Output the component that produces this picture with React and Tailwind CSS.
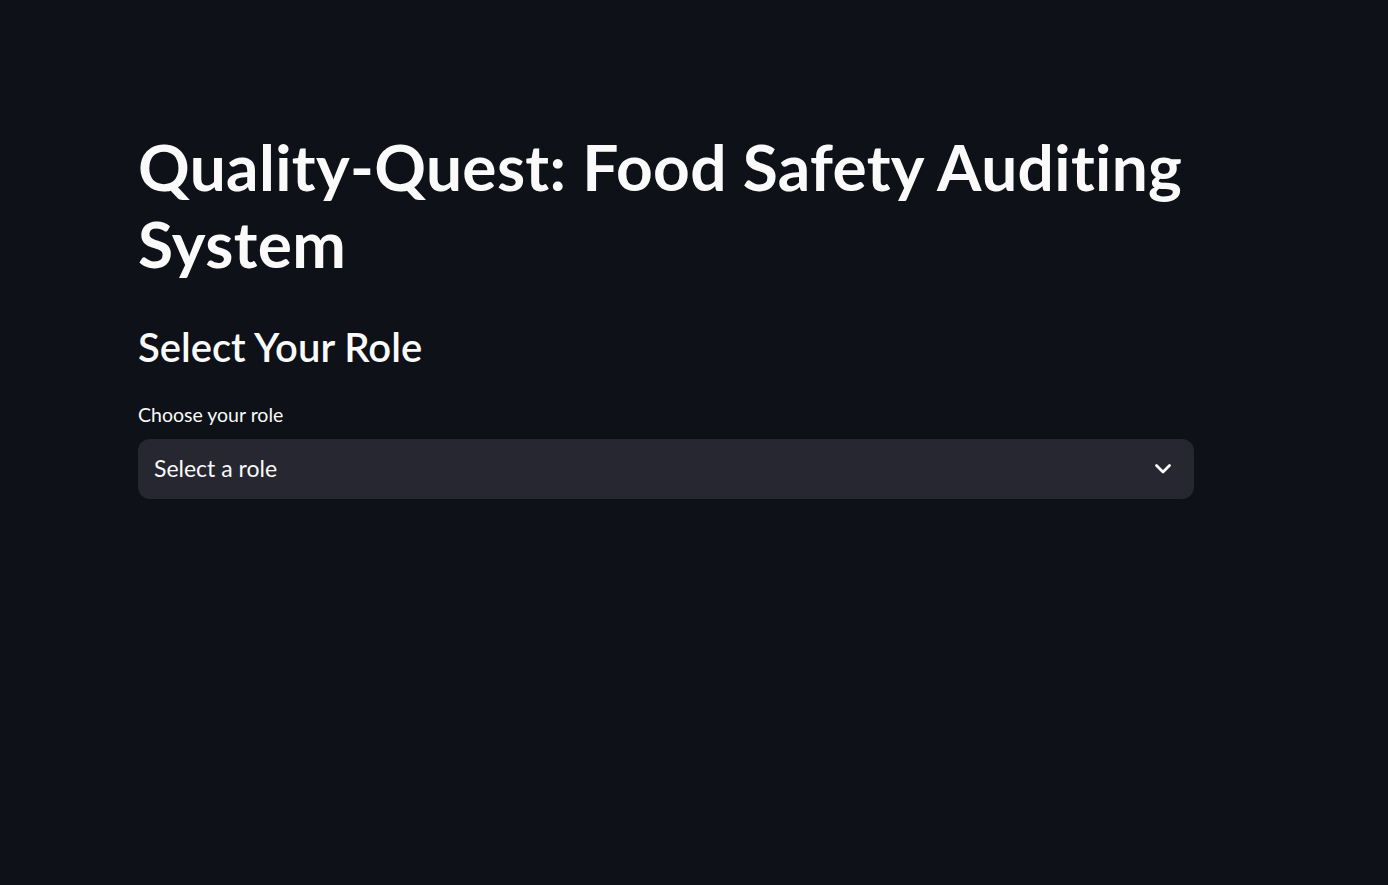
import { useState } from "react";

function Chevron() {
  return (
    <svg width="18" height="12" viewBox="0 0 18 12" fill="none" className="text-[#fafafa]">
      <path d="M2.5 2.5 L9 9 L15.5 2.5" stroke="currentColor" strokeWidth="2.8" strokeLinecap="round" strokeLinejoin="round" />
    </svg>
  );
}

export default function App() {
  const [role] = useState("");

  return (
    <div className="min-h-screen bg-[#0e1117] font-['Lato',sans-serif] text-[#fafafa]">
      <main className="w-[1056px] pl-[138px] box-content pt-[129px]">
        <h1 className="text-[64px] font-bold leading-[1.2] tracking-[0.35px] [font-variant-ligatures:none]">
          Quality-Quest: Food Safety Auditing System
        </h1>

        <h3 className="mt-[40px] text-[40px] font-semibold leading-[48px]">Select Your Role</h3>

        <label className="mt-[29px] block text-[19.5px] leading-[30px]">Choose your role</label>

        <div className="mt-[9.5px] flex h-[60px] items-center justify-between rounded-[12px] bg-[#262730] pl-4 pr-[22px]">
          <span className="text-[23px] leading-[1.2]">{role || "Select a role"}</span>
          <Chevron />
        </div>
      </main>
    </div>
  );
}
